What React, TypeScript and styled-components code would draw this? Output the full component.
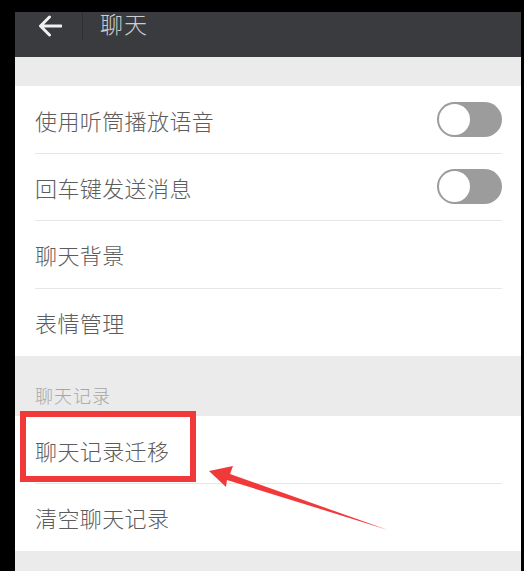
import React from "react";
import styled, { createGlobalStyle } from "styled-components";

const Global = createGlobalStyle`
  html, body { margin: 0; padding: 0; background: #000; }
  body { font-family: "Noto Sans CJK SC", "Noto Sans", sans-serif; }
`;

const Page = styled.div`
  position: relative;
  width: 524px;
  height: 571px;
  overflow: hidden;
  background: #000;
  padding: 12px 3px 0 15px;
  box-sizing: border-box;
`;

const Column = styled.div`
  display: flex;
  flex-direction: column;
  background: #ebebeb;
  height: 559px;
`;

const Header = styled.div`
  height: 45px;
  background: #3a3b3f;
  display: flex;
  align-items: flex-start;
  flex-shrink: 0;
`;

const BackBtn = styled.div`
  width: 68px;
  height: 28px;
  display: flex;
  align-items: center;
  justify-content: center;
  padding-left: 2px;
  box-sizing: border-box;
  border-right: 1px solid #2f3033;
`;

const Title = styled.div`
  margin-left: 17px;
  margin-top: -4px;
  font-size: 23px;
  font-weight: 300;
  line-height: 30px;
  color: #cdcdcd;
  letter-spacing: 1px;
`;

const Gap = styled.div<{ $h: number }>`
  height: ${(p) => p.$h}px;
  flex-shrink: 0;
`;

const Group = styled.div`
  background: #fff;
  display: flex;
  flex-direction: column;
`;

const Row = styled.div<{ $first?: boolean; $h?: number }>`
  height: ${(p) => p.$h ?? 67}px;
  display: flex;
  align-items: center;
  justify-content: space-between;
  padding: 0 19px 0 20px;
  box-sizing: border-box;
  position: relative;
  &::before {
    content: "";
    display: ${(p) => (p.$first ? "none" : "block")};
    position: absolute;
    top: 0;
    left: 20px;
    right: 19px;
    height: 1px;
    background: #e6e6e6;
  }
`;

const Label = styled.span`
  font-size: 22px;
  font-weight: 300;
  color: #5c5c5c;
  letter-spacing: 0.4px;
`;

const SectionTitle = styled.div`
  height: 60px;
  display: flex;
  align-items: flex-end;
  padding: 0 0 8px 20px;
  box-sizing: border-box;
  font-size: 18px;
  font-weight: 300;
  color: #a6a6a6;
  letter-spacing: 1px;
`;

const Toggle = styled.div`
  width: 65px;
  height: 35px;
  border-radius: 18px;
  background: #9c9c9c;
  position: relative;
  flex-shrink: 0;
`;

const Knob = styled.div`
  position: absolute;
  left: 2px;
  top: 2px;
  width: 31px;
  height: 31px;
  border-radius: 50%;
  background: #fff;
`;

const Highlight = styled.div`
  position: absolute;
  left: 20px;
  top: 411px;
  width: 176px;
  height: 71px;
  border: 6px solid #f2393a;
  box-sizing: border-box;
`;

const ArrowSvg = styled.svg`
  position: absolute;
  left: 0;
  top: 0;
  pointer-events: none;
`;

const BackIcon = () => (
  <svg width="24" height="22" viewBox="0 0 24 22">
    <path
      d="M23 11H3M11.5 2L2.5 11l9 9"
      fill="none"
      stroke="#f0f0f0"
      strokeWidth="3"
      strokeLinecap="round"
      strokeLinejoin="round"
    />
  </svg>
);

const Switch = () => (
  <Toggle>
    <Knob />
  </Toggle>
);

export default function App() {
  return (
    <>
      <Global />
      <Page>
        <Column>
          <Header>
            <BackBtn>
              <BackIcon />
            </BackBtn>
            <Title>聊天</Title>
          </Header>
          <Gap $h={29} />
          <Group>
            <Row $first>
              <Label>使用听筒播放语音</Label>
              <Switch />
            </Row>
            <Row>
              <Label>回车键发送消息</Label>
              <Switch />
            </Row>
            <Row $h={68}>
              <Label>聊天背景</Label>
            </Row>
            <Row $h={68}>
              <Label>表情管理</Label>
            </Row>
          </Group>
          <SectionTitle>聊天记录</SectionTitle>
          <Group>
            <Row $first>
              <Label>聊天记录迁移</Label>
            </Row>
            <Row $h={68}>
              <Label>清空聊天记录</Label>
            </Row>
          </Group>
        </Column>
        <Highlight />
        <ArrowSvg width="524" height="571" viewBox="0 0 524 571">
          <polygon
            points="209,471 233,466 230,474 388,530 227,480 226,487"
            fill="#f2393a"
          />
        </ArrowSvg>
      </Page>
    </>
  );
}
